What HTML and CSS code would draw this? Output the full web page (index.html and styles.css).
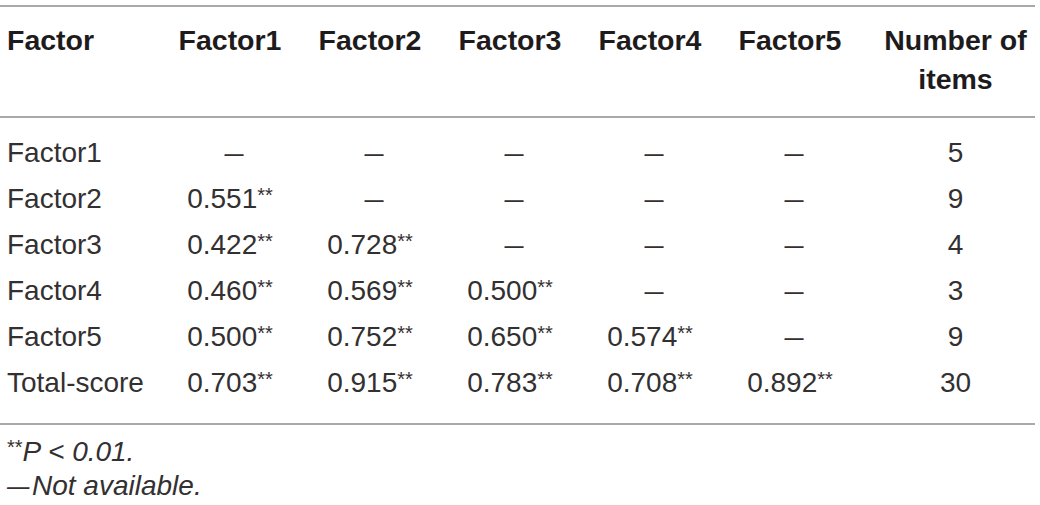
FILE: index.html
```html
<!DOCTYPE html>
<html lang="en">
<head>
<meta charset="utf-8">
<title>Factor correlations</title>
<link rel="stylesheet" href="styles.css">
</head>
<body>
<div class="wrap">
  <table class="corr">
    <colgroup>
      <col class="c-label">
      <col class="c-num">
      <col class="c-num">
      <col class="c-num">
      <col class="c-num">
      <col class="c-num">
      <col class="c-items">
    </colgroup>
    <thead>
      <tr>
        <th class="label">Factor</th>
        <th>Factor1</th>
        <th>Factor2</th>
        <th>Factor3</th>
        <th>Factor4</th>
        <th>Factor5</th>
        <th class="items">Number of<br>items</th>
      </tr>
    </thead>
    <tbody>
      <tr>
        <td class="label">Factor1</td>
        <td><span class="dash">—</span></td>
        <td><span class="dash">—</span></td>
        <td><span class="dash">—</span></td>
        <td><span class="dash">—</span></td>
        <td><span class="dash">—</span></td>
        <td class="items">5</td>
      </tr>
      <tr>
        <td class="label">Factor2</td>
        <td>0.551<span class="sig">**</span></td>
        <td><span class="dash">—</span></td>
        <td><span class="dash">—</span></td>
        <td><span class="dash">—</span></td>
        <td><span class="dash">—</span></td>
        <td class="items">9</td>
      </tr>
      <tr>
        <td class="label">Factor3</td>
        <td>0.422<span class="sig">**</span></td>
        <td>0.728<span class="sig">**</span></td>
        <td><span class="dash">—</span></td>
        <td><span class="dash">—</span></td>
        <td><span class="dash">—</span></td>
        <td class="items">4</td>
      </tr>
      <tr>
        <td class="label">Factor4</td>
        <td>0.460<span class="sig">**</span></td>
        <td>0.569<span class="sig">**</span></td>
        <td>0.500<span class="sig">**</span></td>
        <td><span class="dash">—</span></td>
        <td><span class="dash">—</span></td>
        <td class="items">3</td>
      </tr>
      <tr>
        <td class="label">Factor5</td>
        <td>0.500<span class="sig">**</span></td>
        <td>0.752<span class="sig">**</span></td>
        <td>0.650<span class="sig">**</span></td>
        <td>0.574<span class="sig">**</span></td>
        <td><span class="dash">—</span></td>
        <td class="items">9</td>
      </tr>
      <tr>
        <td class="label">Total-score</td>
        <td>0.703<span class="sig">**</span></td>
        <td>0.915<span class="sig">**</span></td>
        <td>0.783<span class="sig">**</span></td>
        <td>0.708<span class="sig">**</span></td>
        <td>0.892<span class="sig">**</span></td>
        <td class="items">30</td>
      </tr>
    </tbody>
  </table>
  <div class="notes">
    <p><span class="sig">**</span>P &lt; 0.01.</p>
    <p><span class="ndash">—</span>Not available.</p>
  </div>
</div>
</body>
</html>
```

FILE: styles.css
```css
html, body {
  margin: 0;
  padding: 0;
  background: #ffffff;
}

body {
  font-family: "Liberation Sans", Arial, "Helvetica Neue", sans-serif;
  color: #231f20;
}

.wrap {
  width: 1035px;
  padding-top: 5px;
}

.corr {
  width: 1035px;
  table-layout: fixed;
  border-collapse: collapse;
  border-top: 2px solid #a9a9a9;
  border-bottom: 2px solid #a9a9a9;
}

.c-label { width: 160px; }
.c-num { width: 140px; }
.c-items { width: 175px; }

.corr th {
  font-size: 28.5px;
  font-weight: 700;
  line-height: 39px;
  padding: 14px 0 17px;
  text-align: center;
  vertical-align: top;
  border-bottom: 2px solid #a9a9a9;
  color: #1e1b1c;
}

.corr td {
  font-size: 28px;
  font-weight: 400;
  line-height: 46px;
  padding: 0;
  text-align: center;
  white-space: nowrap;
  color: #333031;
}

.corr tbody tr:first-child td {
  padding-top: 12px;
}

.corr tbody tr:last-child td {
  padding-bottom: 17px;
}

.corr .label {
  text-align: left;
  padding-left: 7px;
}

.corr .items {
  padding-left: 16px;
}

.sig {
  font-size: 20px;
  line-height: 0;
  vertical-align: 6px;
}

.dash {
  display: inline-block;
  margin-left: 8px;
  transform: scaleX(0.68);
}

.notes {
  margin-top: 10px;
  padding-left: 7px;
  font-size: 28px;
  line-height: 34px;
  font-style: italic;
  color: #333031;
}

.notes p {
  margin: 0;
}

.notes .sig {
  font-size: 20px;
  font-style: normal;
  vertical-align: 7px;
}

.ndash {
  display: inline-block;
  transform: scaleX(0.8);
  transform-origin: left center;
  margin-right: -3px;
}
```
